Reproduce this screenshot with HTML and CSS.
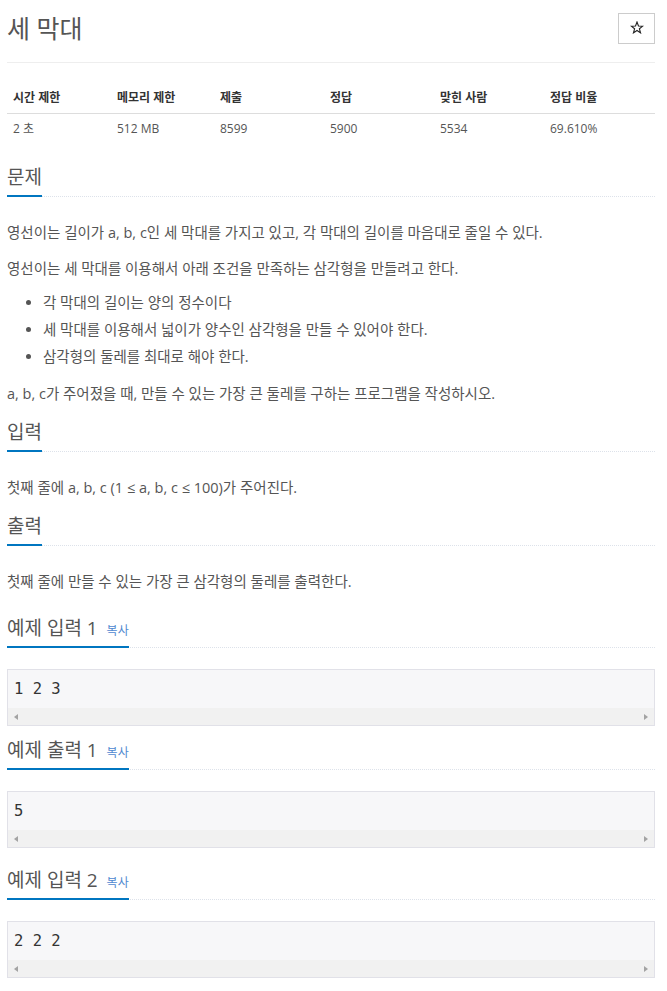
FILE: index.html
```html
<!DOCTYPE html>
<html lang="ko">
<head>
<meta charset="utf-8">
<title>세 막대</title>
<link rel="stylesheet" href="styles.css">
</head>
<body>
<div class="page">
  <div class="page-header">
    <h1 class="title">세 막대</h1>
    <button class="star" type="button" aria-label="즐겨찾기">
      <svg width="14" height="13" viewBox="-1 -1 14 13" aria-hidden="true">
        <polygon points="6,0 7.47,3.98 11.71,4.15 8.38,6.77 9.53,10.85 6,8.5 2.47,10.85 3.62,6.77 0.29,4.15 4.53,3.98" fill="none" stroke="#222" stroke-width="1.1" stroke-linejoin="miter"/>
      </svg>
    </button>
  </div>

  <table class="info">
    <colgroup>
      <col class="c1"><col class="c2"><col class="c3"><col class="c4"><col class="c5"><col class="c6">
    </colgroup>
    <thead>
      <tr><th>시간 제한</th><th>메모리 제한</th><th>제출</th><th>정답</th><th>맞힌 사람</th><th>정답 비율</th></tr>
    </thead>
    <tbody>
      <tr><td>2 초</td><td>512 MB</td><td>8599</td><td>5900</td><td>5534</td><td>69.610%</td></tr>
    </tbody>
  </table>

  <div class="problem">
    <section class="sec">
      <div class="headline"><h2>문제</h2></div>
      <div class="text">
        <p>영선이는 길이가 a, b, c인 세 막대를 가지고 있고, 각 막대의 길이를 마음대로 줄일 수 있다.</p>
        <p>영선이는 세 막대를 이용해서 아래 조건을 만족하는 삼각형을 만들려고 한다.</p>
        <ul>
          <li>각 막대의 길이는 양의 정수이다</li>
          <li>세 막대를 이용해서 넓이가 양수인 삼각형을 만들 수 있어야 한다.</li>
          <li>삼각형의 둘레를 최대로 해야 한다.</li>
        </ul>
        <p>a, b, c가 주어졌을 때, 만들 수 있는 가장 큰 둘레를 구하는 프로그램을 작성하시오.</p>
      </div>
    </section>

    <section class="sec sec-next">
      <div class="headline"><h2>입력</h2></div>
      <div class="text">
        <p>첫째 줄에 a, b, c (1 ≤ a, b, c ≤ 100)가 주어진다.</p>
      </div>
    </section>

    <section class="sec sec-next">
      <div class="headline"><h2>출력</h2></div>
      <div class="text">
        <p>첫째 줄에 만들 수 있는 가장 큰 삼각형의 둘레를 출력한다.</p>
      </div>
    </section>

    <section class="sec sample sample-start">
      <div class="headline"><h2>예제 입력 1 <a class="copy">복사</a></h2></div>
      <div class="sampledata">
        <pre>1 2 3</pre>
        <div class="hscroll"><span class="arrow-l"></span><span class="arrow-r"></span></div>
      </div>
    </section>

    <section class="sec sample sample-pair">
      <div class="headline"><h2>예제 출력 1 <a class="copy">복사</a></h2></div>
      <div class="sampledata">
        <pre>5</pre>
        <div class="hscroll"><span class="arrow-l"></span><span class="arrow-r"></span></div>
      </div>
    </section>

    <section class="sec sample sample-row">
      <div class="headline"><h2>예제 입력 2 <a class="copy">복사</a></h2></div>
      <div class="sampledata">
        <pre>2 2 2</pre>
        <div class="hscroll"><span class="arrow-l"></span><span class="arrow-r"></span></div>
      </div>
    </section>
  </div>
</div>
</body>
</html>
```

FILE: styles.css
```css
html, body {
  margin: 0;
  padding: 0;
  background: #ffffff;
}

body {
  font-family: "Open Sans", "Noto Sans CJK KR", sans-serif;
  color: #555555;
}

.page {
  padding: 0 12px 0 7px;
}

/* header */
.page-header {
  display: flex;
  justify-content: space-between;
  align-items: center;
  padding: 13px 0 18px;
  border-bottom: 1px solid #eeeeee;
}

.title {
  margin: 0;
  font-size: 25px;
  font-weight: 400;
  line-height: 31px;
  color: #555555;
}

.star {
  box-sizing: border-box;
  width: 37px;
  height: 31px;
  margin: 0;
  padding: 0 0 2px;
  border: 1px solid #cccccc;
  border-radius: 0;
  background: #ffffff;
  display: flex;
  align-items: center;
  justify-content: center;
}

.star svg {
  display: block;
}

/* info table */
.info {
  width: 100%;
  margin-top: 16px;
  border-collapse: collapse;
  table-layout: fixed;
}

.c1 { width: 104px; }
.c2 { width: 103px; }
.c3 { width: 110px; }
.c4 { width: 110px; }
.c5 { width: 110px; }
.c6 { width: auto; }

.info th {
  text-align: left;
  font-size: 12px;
  font-weight: 700;
  color: #333333;
  line-height: 18px;
  padding: 10px 5px 6px 6px;
  border-bottom: 1px solid #dddddd;
}

.info td {
  font-size: 12px;
  color: #555555;
  line-height: 18px;
  padding: 6px 5px 8px 6px;
}

/* problem sections */
.problem {
  display: flex;
  flex-direction: column;
  margin-top: 20px;
}

.sec-next { margin-top: 14px; }
.sample-start { margin-top: 22px; }
.sample-pair { margin-top: 13px; }
.sample-row { margin-top: 21px; }

.headline {
  display: flex;
  align-items: flex-start;
  border-bottom: 1px dotted #dde2ea;
  margin-bottom: 22px;
}

.sample .headline {
  margin-bottom: 21px;
}

.headline h2 {
  margin: 0 0 -1px;
  padding-bottom: 7px;
  font-size: 19px;
  font-weight: 400;
  line-height: 22px;
  color: #555555;
  border-bottom: 2px solid #0076c0;
}

.copy {
  font-size: 12px;
  line-height: 0;
  color: #4f88d0;
  margin-left: 4px;
  cursor: pointer;
}

.text {
  font-size: 14.5px;
  line-height: 27px;
}

.text p {
  margin: 0 0 9px;
}

.text > :last-child {
  margin-bottom: 0;
}

.text ul {
  margin: -2px 0 10px;
  padding-left: 36px;
}

/* sample data */
.sampledata {
  border: 1px solid #e1e1e8;
  background: #f7f7f9;
}

.sampledata pre {
  margin: 0;
  padding: 9px 6px;
  font-family: "DejaVu Sans Mono", monospace;
  font-size: 15.5px;
  line-height: 20px;
  color: #333333;
}

.hscroll {
  height: 17px;
  background: #f1f1f1;
  display: flex;
  align-items: center;
  justify-content: space-between;
  padding: 0 6px;
}

.arrow-l,
.arrow-r {
  width: 0;
  height: 0;
  border-top: 3.5px solid transparent;
  border-bottom: 3.5px solid transparent;
}

.arrow-l {
  border-right: 4px solid #a3a3a3;
}

.arrow-r {
  border-left: 4px solid #a3a3a3;
}
```
